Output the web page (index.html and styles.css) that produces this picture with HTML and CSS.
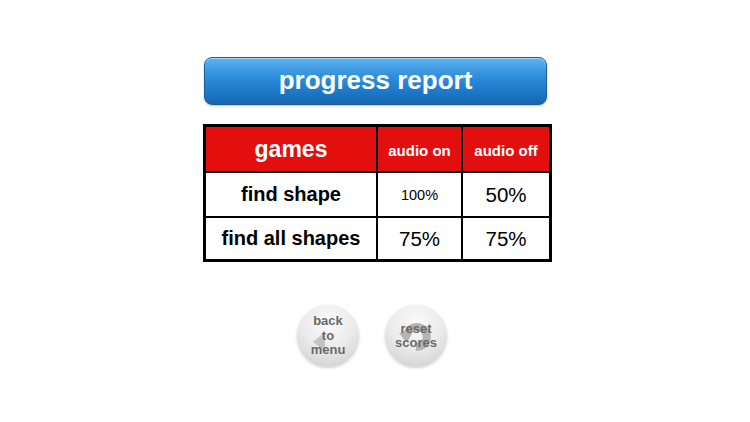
FILE: index.html
```html
<!DOCTYPE html>
<html>
<head>
<meta charset="utf-8">
<link rel="stylesheet" href="styles.css">
</head>
<body>
<div class="page">
  <div class="banner">progress report</div>
  <div class="report">
    <div class="cell head games">games</div>
    <div class="cell head small">audio on</div>
    <div class="cell head small">audio off</div>
    <div class="cell name">find shape</div>
    <div class="cell val tiny">100%</div>
    <div class="cell val">50%</div>
    <div class="cell name">find all shapes</div>
    <div class="cell val">75%</div>
    <div class="cell val">75%</div>
  </div>
  <div class="buttons">
    <div class="round">
      <svg class="icon" width="62" height="62" viewBox="0 0 62 62"><polygon points="16,37 28,27 28,46" fill="#c4c4c4"/></svg>
      <span class="label">back<br>to<br>menu</span>
    </div>
    <div class="round">
      <svg class="icon" width="62" height="62" viewBox="0 0 62 62"><path d="M22,30 A10,10 0 1 1 31,42" fill="none" stroke="#b4b4b4" stroke-width="8"/><polygon points="14,28 28,26 22,38" fill="#b4b4b4"/></svg>
      <span class="label">reset<br>scores</span>
    </div>
  </div>
</div>
</body>
</html>
```
FILE: styles.css
```css
html, body {
  margin: 0;
  padding: 0;
  background: #ffffff;
}
.page {
  width: 750px;
  height: 422px;
  display: flex;
  flex-direction: column;
  align-items: flex-start;
  font-family: "Liberation Sans", Arial, sans-serif;
}
.banner {
  margin-top: 57px;
  margin-left: 204px;
  width: 341px;
  height: 44px;
  border: 1px solid #1d5f9e;
  border-radius: 8px;
  background: linear-gradient(to bottom, #5fb2ee 0%, #2f8fdc 40%, #1b78c8 75%, #1766ad 100%);
  box-shadow: inset 0 1px 0 rgba(255,255,255,0.5), 0 1px 2px rgba(0,0,0,0.25);
  color: #ffffff;
  font-weight: bold;
  font-size: 26px;
  display: flex;
  align-items: center;
  justify-content: center;
  padding-bottom: 2px;
  box-sizing: content-box;
}
.report {
  margin-top: 19px;
  margin-left: 203px;
  display: grid;
  grid-template-columns: 170px 83px 86px;
  grid-template-rows: 44px 43px 41px;
  gap: 2px;
  padding: 3px;
  background: #000000;
}
.cell {
  background: #ffffff;
  display: flex;
  align-items: center;
  justify-content: center;
  color: #000000;
}
.head {
  background: #e30e0e;
  color: #ffffff;
  font-weight: bold;
}
.games {
  font-size: 23px;
}
.small {
  font-size: 15px;
  padding-top: 2px;
}
.name {
  font-weight: bold;
  font-size: 20px;
}
.val {
  font-size: 20.5px;
}
.tiny {
  font-size: 14.5px;
}
.buttons {
  margin-top: 43px;
  margin-left: 297px;
  display: flex;
  gap: 26px;
}
.round {
  position: relative;
  width: 62px;
  height: 62px;
  border-radius: 50%;
  background: radial-gradient(circle at 50% 30%, #fbfbfb 0%, #ececec 45%, #d6d6d6 80%, #c6c6c6 100%);
  box-shadow: 0 1px 3px rgba(0,0,0,0.2);
  display: flex;
  align-items: center;
  justify-content: center;
}
.icon {
  position: absolute;
  left: 0;
  top: 0;
}
.label {
  position: relative;
  color: #6a6a6a;
  font-weight: bold;
  font-size: 13px;
  line-height: 14.5px;
  text-align: center;
}
```
